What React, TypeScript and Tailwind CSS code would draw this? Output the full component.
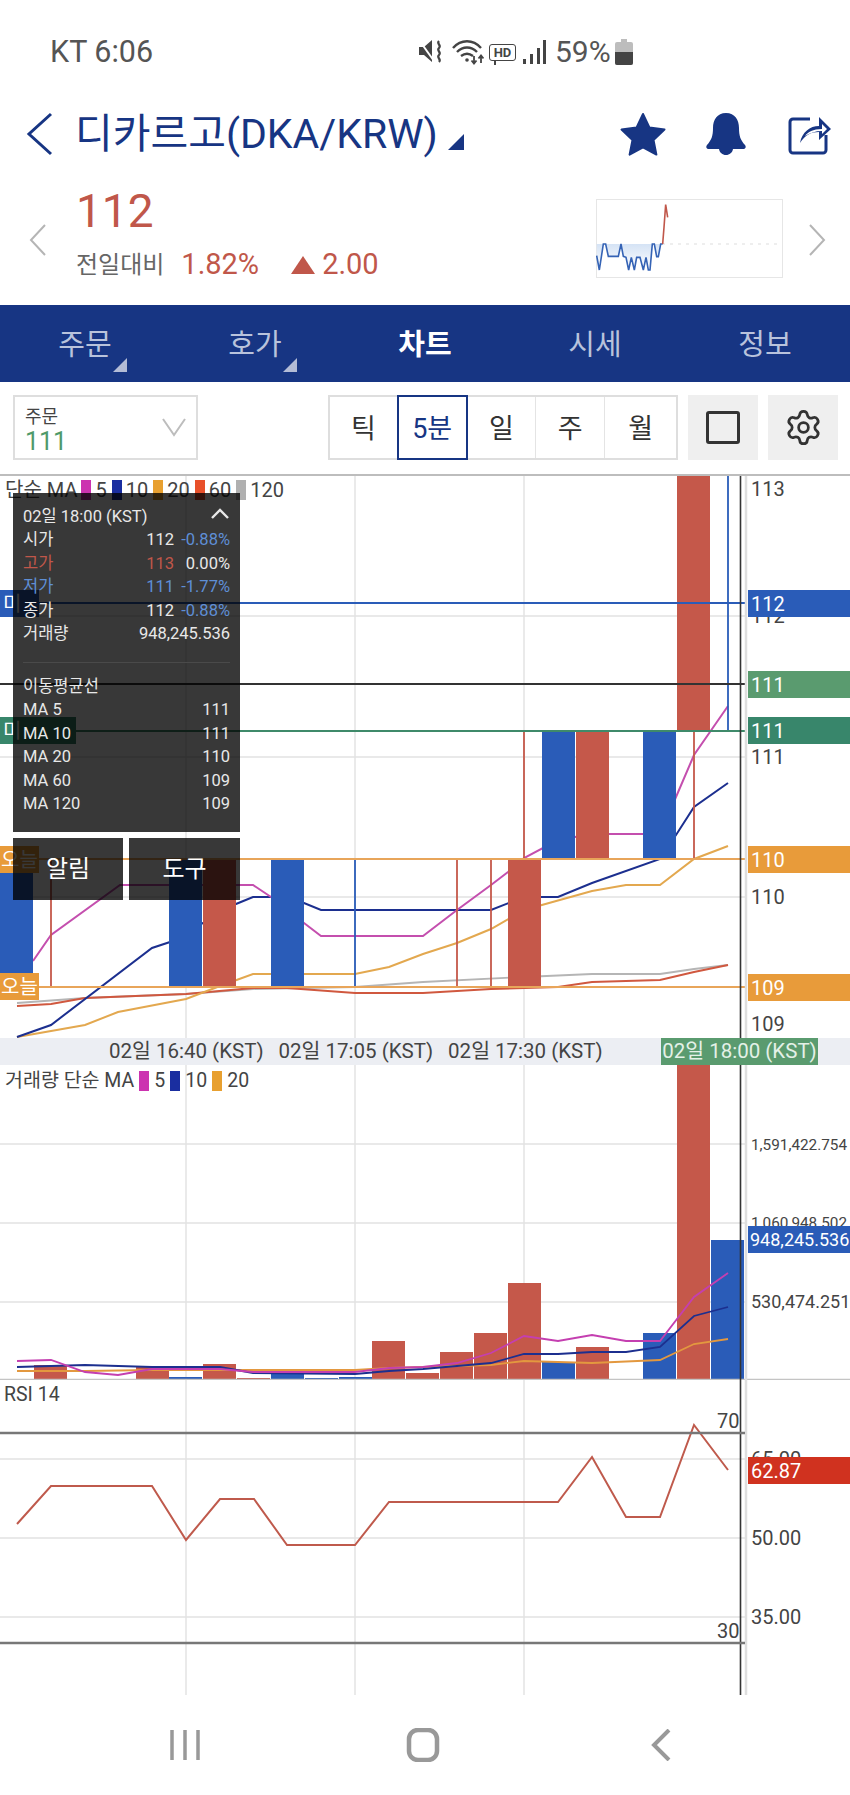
import { Settings } from 'lucide-react';

const CANDLE_RED = '#c5584a';
const CANDLE_BLUE = '#2a5cb8';
const GRID = '#e2e2e2';

type Bar = [number, number, 'r' | 'b'];

const pts = (list: number[][]) => list.map((p) => p.join(',')).join(' ');

const MA5 = [[33, 961], [51, 935], [120, 885], [253, 885], [271, 897], [304, 923], [321, 936], [423, 936], [457, 910], [491, 885], [508, 872], [524, 858], [558, 840], [592, 834], [660, 834], [676, 797], [694, 755], [728, 706]];
const MA10 = [[17, 1037], [51, 1025], [152, 948], [170, 942], [236, 904], [253, 897], [271, 897], [304, 903], [321, 910], [491, 910], [524, 897], [558, 897], [592, 883], [660, 859], [676, 835], [694, 807], [728, 783]];
const MA20 = [[17, 1037], [85, 1025], [118, 1012], [186, 999], [220, 986], [253, 974], [355, 974], [389, 967], [423, 954], [457, 943], [491, 929], [524, 910], [592, 891], [626, 885], [660, 885], [694, 859], [728, 846]];
const MA60 = [[17, 1006], [51, 1004], [85, 998], [186, 994], [253, 988], [287, 988], [355, 993], [423, 993], [491, 989], [558, 987], [592, 982], [660, 980], [694, 972], [728, 965]];
const MA120 = [[17, 1003], [85, 998], [186, 994], [253, 989], [355, 987], [423, 982], [524, 977], [592, 974], [660, 974], [694, 969], [728, 965]];

// candle: x, top, height
const CANDLES: [number, number, number, string][] = [
  [0, 859, 128, CANDLE_BLUE],
  [169, 859, 128, CANDLE_BLUE],
  [203, 859, 128, CANDLE_RED],
  [271, 859, 128, CANDLE_BLUE],
  [508, 859, 128, CANDLE_RED],
  [542, 731, 128, CANDLE_BLUE],
  [576, 731, 128, CANDLE_RED],
  [643, 731, 128, CANDLE_BLUE],
  [677, 474, 257, CANDLE_RED],
];

const WICKS: [number, number, number, string][] = [
  [51, 859, 987, CANDLE_RED],
  [355, 859, 987, CANDLE_BLUE],
  [457, 859, 987, CANDLE_RED],
  [491, 859, 987, CANDLE_RED],
  [524, 731, 859, CANDLE_RED],
  [694, 731, 859, CANDLE_RED],
  [728, 474, 731, CANDLE_BLUE],
];

const VOLUME: Bar[] = [
  [0, 1379, 'b'], [34, 1365, 'r'], [68, 1379, 'r'], [102, 1379, 'r'], [136, 1366, 'r'], [169, 1377, 'b'], [203, 1364, 'r'],
  [237, 1378, 'r'], [271, 1371, 'b'], [305, 1378, 'b'], [339, 1377, 'b'], [372, 1341, 'r'], [406, 1373, 'r'], [440, 1352, 'r'],
  [474, 1333, 'r'], [508, 1283, 'r'], [542, 1362, 'b'], [576, 1347, 'r'], [643, 1333, 'b'], [677, 1065, 'r'], [711, 1240, 'b'],
];

const VOL5 = [[17, 1361], [51, 1360], [85, 1372], [118, 1375], [152, 1369], [220, 1369], [253, 1372], [355, 1372], [389, 1368], [423, 1367], [457, 1363], [491, 1353], [524, 1336], [558, 1341], [592, 1335], [626, 1341], [660, 1341], [694, 1297], [728, 1273]];
const VOL10 = [[17, 1367], [85, 1365], [152, 1367], [220, 1367], [253, 1373], [355, 1374], [389, 1371], [423, 1369], [457, 1366], [491, 1363], [524, 1354], [558, 1354], [592, 1352], [626, 1352], [660, 1347], [694, 1316], [728, 1307]];
const VOL20 = [[17, 1371], [85, 1371], [152, 1370], [355, 1370], [389, 1368], [423, 1367], [491, 1365], [524, 1361], [592, 1363], [660, 1360], [694, 1344], [728, 1339]];

const RSI = [[17, 1524], [51, 1486], [152, 1486], [186, 1540], [220, 1499], [254, 1499], [287, 1545], [355, 1545], [389, 1502], [558, 1502], [592, 1457], [626, 1517], [660, 1517], [694, 1425], [728, 1470]];

const SPARK_BLUE = [[20, 185], [28, 228], [40, 150], [47, 150], [55, 187], [85, 187], [93, 150], [100, 187], [108, 190], [116, 228], [124, 190], [133, 228], [140, 190], [150, 190], [160, 228], [168, 190], [175, 228], [180, 228], [187, 150], [193, 150], [200, 188], [205, 188], [212, 150], [218, 150]];
const SPARK_RED = [[218, 150], [222, 100], [227, 32], [233, 70]];

function VerticalGrid({ top, bottom }: { top: number; bottom: number }) {
  return (
    <g>
      {[186, 355, 524].map((x) => (
        <line key={x} x1={x} x2={x} y1={top} y2={bottom} stroke="#dcdcdc" strokeWidth="1.2" />
      ))}
    </g>
  );
}

function AxisEdge({ top, bottom }: { top: number; bottom: number }) {
  return (
    <g>
      <line x1="746" x2="746" y1={top} y2={bottom} stroke="#dedede" strokeWidth="2.5" />
      <line x1="740.5" x2="740.5" y1={top} y2={bottom} stroke="#333" strokeWidth="1.6" />
    </g>
  );
}

function PriceTag({ className, size = 'text-[20px]', children }: { className: string; size?: string; children: React.ReactNode }) {
  return (
    <div className={`absolute flex h-[27px] items-center overflow-hidden text-white ${size} ${className}`}>{children}</div>
  );
}

function TooltipRow({ label, value, pct, labelColor = 'text-[#e8e8e8]', valueColor = 'text-[#e8e8e8]', pctColor = 'text-[#5f8fd6]' }: {
  label: string; value: string; pct?: string; labelColor?: string; valueColor?: string; pctColor?: string;
}) {
  return (
    <div className="flex h-[23.5px] items-center justify-between">
      <span className={labelColor}>{label}</span>
      <div className="flex items-center">
        <span className={valueColor}>{value}</span>
        {pct && <span className={`w-[56px] text-right ${pctColor}`}>{pct}</span>}
      </div>
    </div>
  );
}

function StatusIcons() {
  return (
    <div className="ml-[264px] flex items-center text-[#555]">
      <svg width="26" height="26" viewBox="0 0 26 26" className="mr-[8px]">
        <path d="M1 8h5l8-7v22l-8-7H1z" fill="#444" />
        <path d="M1 1l15 21" stroke="#fff" strokeWidth="2" />
        <path d="M21 2c-3 3 3 4 0 7s3 4 0 7 3 4 0 7" fill="none" stroke="#444" strokeWidth="2.2" />
      </svg>
      <svg width="32" height="26" viewBox="0 0 32 26" className="mr-[5px]">
        <path d="M1 9c8-9 20-9 28 0M5 13c6-6 14-6 20 0M9 17c4-3 8-3 12 0" fill="none" stroke="#444" strokeWidth="2.4" />
        <circle cx="15" cy="21" r="1.8" fill="#444" />
        <path d="M22 17v7M19.5 21.5l2.5 3 2.5-3M29 24v-7M26.5 19.5l2.5-3 2.5 3" fill="none" stroke="#444" strokeWidth="1.8" />
      </svg>
      <div className="relative mr-[6px] flex h-[17px] w-[27px] items-center justify-center rounded-[3px] border-[1.5px] border-[#444] text-[13px] font-bold leading-none text-[#444]">
        HD
        <span className="absolute bottom-[-5px] left-[4px] h-[5px] w-[2px] bg-[#444]" />
      </div>
      <svg width="24" height="24" viewBox="0 0 24 24" className="mr-[9px]">
        <rect x="1" y="19" width="3" height="5" fill="#444" />
        <rect x="8" y="14" width="3" height="10" fill="#444" />
        <rect x="15" y="8" width="3" height="16" fill="#444" />
        <rect x="21" y="0" width="3" height="24" fill="#444" />
      </svg>
      <span className="w-[55px] text-[30px] leading-none">59%</span>
      <svg width="18" height="26" viewBox="0 0 18 26" className="ml-[5px]">
        <path d="M6 0h6v3h4a2 2 0 0 1 2 2v19a2 2 0 0 1-2 2H2a2 2 0 0 1-2-2V5a2 2 0 0 1 2-2h4z" fill="#bdbdbd" />
        <path d="M0 13h18v11a2 2 0 0 1-2 2H2a2 2 0 0 1-2-2z" fill="#444" />
      </svg>
    </div>
  );
}

function Header() {
  return (
    <div className="flex h-[60px] items-center text-[#173583]">
      <svg width="30" height="44" viewBox="0 0 30 44" className="ml-[25px]">
        <path d="M26 2L4 22l22 20" fill="none" stroke="#173583" strokeWidth="3" />
      </svg>
      <span className="ml-[20px] w-[362px] whitespace-nowrap text-[41px] leading-none">디카르고(DKA/KRW)</span>
      <span className="ml-[11px] mt-[16px] h-0 w-0 border-b-[16px] border-l-[16px] border-b-[#173583] border-l-transparent" />
      <svg width="48" height="44" viewBox="0 0 48 44" className="ml-[155px]">
        <path d="M24 2l6.5 13.6 15 2-11 10.300 2.900 14.700L24 35.300 10.600 42.600l2.900-14.700-11-10.300 15-2z" fill="#173583" stroke="#173583" strokeWidth="2" strokeLinejoin="round" />
      </svg>
      <svg width="42" height="44" viewBox="0 0 42 44" className="ml-[38px]">
        <path d="M21 1c-9 0-13 7-13 15 0 8-1.500 12-6 17-1.500 2-.5 4 2 4h10c.5 3.500 3.500 6 7 6s6.500-2.500 7-6h10c2.500 0 3.500-2 2-4-4.500-5-6-9-6-17 0-8-4-15-13-15z" fill="#173583" />
      </svg>
      <svg width="44" height="42" viewBox="0 0 44 42" className="ml-[41px]">
        <path d="M22 6H5a3 3 0 0 0-3 3v28a3 3 0 0 0 3 3h30a3 3 0 0 0 3-3V22" fill="none" stroke="#173583" strokeWidth="3" />
        <path d="M12 30c2-11 10-17 19-17V4l12 12-12 11v-8c-8 0-14 3-19 11z" fill="#173583" />
        <path d="M17 23c3-4 8-7 17-7V11l5 5-5 5v-3c-7 0-12 2-17 5z" fill="#fff" />
      </svg>
    </div>
  );
}

function PriceSummary() {
  return (
    <div className="flex h-[141px] items-start">
      <svg width="18" height="32" viewBox="0 0 18 32" className="ml-[29px] mt-[60px]">
        <path d="M16 1L2 16l14 15" fill="none" stroke="#b5b5b5" strokeWidth="2" />
      </svg>
      <div className="ml-[29px] mt-[23px] w-[518px]">
        <div className="h-[48px] text-[46px] leading-[48px] text-[#c0574a]">112</div>
        <div className="mt-[11px] flex h-[38px] items-center">
          <span className="text-[24px] text-[#666]">전일대비</span>
          <span className="ml-[17px] text-[29px] text-[#c0574a]">1.82%</span>
          <span className="ml-[32px] h-0 w-0 border-x-[12px] border-b-[18px] border-x-transparent border-b-[#c0574a]" />
          <span className="ml-[7px] text-[29px] text-[#c0574a]">2.00</span>
        </div>
      </div>
      <svg width="187" height="79" viewBox="6 5 187 79" className="ml-[2px] mt-[35px]">
        <defs>
          <linearGradient id="spark-fill" x1="0" y1="0" x2="0" y2="1">
            <stop offset="0" stopColor="#d5e3f5" />
            <stop offset="1" stopColor="#ffffff" />
          </linearGradient>
        </defs>
        <rect x="6.500" y="5.500" width="186" height="78" fill="#fff" stroke="#e6e6e6" />
        <polygon points={pts(SPARK_BLUE.map(([x, y]) => [x / 3, y / 3]).concat([[72.7, 50], [6.7, 50]]))} fill="url(#spark-fill)" />
        <line x1="72" x2="192" y1="50" y2="50" stroke="#dddddd" strokeDasharray="3 5" />
        <polyline points={pts(SPARK_BLUE.map(([x, y]) => [x / 3, y / 3]))} fill="none" stroke="#3563b5" strokeWidth="1.6" />
        <polyline points={pts(SPARK_RED.map(([x, y]) => [x / 3, y / 3]))} fill="none" stroke="#c0574a" strokeWidth="1.6" />
      </svg>
      <svg width="18" height="32" viewBox="0 0 18 32" className="ml-[25px] mt-[60px]">
        <path d="M2 1l14 15L2 31" fill="none" stroke="#b5b5b5" strokeWidth="2" />
      </svg>
    </div>
  );
}

function TabBar() {
  const tabs = ['주문', '호가', '차트', '시세', '정보'];
  return (
    <div className="grid h-[77px] grid-cols-5 bg-[#173583]">
      {tabs.map((tab, i) => (
        <div key={tab} className="relative flex items-center justify-center pt-[4px]">
          <span className={i === 2 ? 'text-[29px] font-bold text-white' : 'text-[29px] text-[#b9c3dc]'}>{tab}</span>
          {i < 2 && (
            <span className="absolute bottom-[10px] left-[113px] h-0 w-0 border-b-[14px] border-l-[14px] border-b-[#b3bcd6] border-l-transparent" />
          )}
        </div>
      ))}
    </div>
  );
}

function Toolbar() {
  const periods = ['틱', '5분', '일', '주', '월'];
  return (
    <div className="flex h-[92px] items-start pt-[13px]">
      <div className="relative ml-[13px] h-[65px] w-[185px] border-2 border-[#dedede] pl-[10px] pt-[9px]">
        <div className="text-[18px] leading-[22px] text-[#444]">주문</div>
        <div className="mt-[1px] text-[25px] leading-[26px] text-[#4f9a6a]">111</div>
        <svg width="26" height="20" viewBox="0 0 26 20" className="absolute right-[9px] top-[20px]">
          <path d="M2 2l11 16L24 2" fill="none" stroke="#bdbdbd" strokeWidth="2" />
        </svg>
      </div>
      <div className="ml-[130px] flex h-[65px] w-[350px] border-2 border-[#dedede]">
        {periods.map((p, i) => (
          <div
            key={p}
            className={
              i === 1
                ? 'z-10 my-[-2px] flex w-[71px] items-center justify-center border-2 border-[#173583] pt-[4px] text-[27px] text-[#173583]'
                : i === 0
                  ? 'flex w-[67px] items-center justify-center pt-[4px] text-[27px] text-[#333]'
                  : 'flex w-[69px] items-center justify-center border-r border-[#e4e4e4] pt-[4px] text-[27px] text-[#333] last:w-[71px] last:border-r-0'
            }
          >
            {p}
          </div>
        ))}
      </div>
      <div className="ml-[10px] flex h-[65px] w-[70px] items-center justify-center bg-[#efefef]">
        <div className="h-[33px] w-[34px] rounded-[3px] border-[3px] border-[#333]" />
      </div>
      <div className="ml-[10px] flex h-[65px] w-[70px] items-center justify-center bg-[#efefef]">
        <Settings size={39} strokeWidth={1.700} color="#333" />
      </div>
    </div>
  );
}

function Tooltip() {
  return (
    <>
      <div className="absolute left-[13px] top-[19px] h-[339px] w-[227px] bg-black/[0.78] pl-[10px] pr-[10px] pt-[12px] text-[16.5px] leading-none text-[#e8e8e8]">
        <div className="relative flex h-[23.5px] items-center">
          <span>02일 18:00 (KST)</span>
          <svg width="20" height="12" viewBox="0 0 20 12" className="absolute right-0 top-[3px]">
            <path d="M2 10l8-8 8 8" fill="none" stroke="#e8e8e8" strokeWidth="2.4" />
          </svg>
        </div>
        <TooltipRow label="시가" value="112" pct="-0.88%" />
        <TooltipRow label="고가" value="113" pct="0.00%" labelColor="text-[#c0574a]" valueColor="text-[#c0574a]" pctColor="text-[#e8e8e8]" />
        <TooltipRow label="저가" value="111" pct="-1.77%" labelColor="text-[#5f8fd6]" valueColor="text-[#5f8fd6]" />
        <TooltipRow label="종가" value="112" pct="-0.88%" />
        <TooltipRow label="거래량" value="948,245.536" />
        <div className="mb-[12px] mt-[16px] h-px bg-[#4a4a4a]" />
        <TooltipRow label="이동평균선" value="" />
        <TooltipRow label="MA 5" value="111" />
        <TooltipRow label="MA 10" value="111" />
        <TooltipRow label="MA 20" value="110" />
        <TooltipRow label="MA 60" value="109" />
        <TooltipRow label="MA 120" value="109" />
      </div>
      <div className="absolute left-[13px] top-[364px] flex gap-[6px] text-[24px] text-white">
        <div className="flex h-[62px] w-[110px] items-center justify-center bg-black/[0.78]">알림</div>
        <div className="flex h-[62px] w-[111px] items-center justify-center bg-black/[0.78]">도구</div>
      </div>
    </>
  );
}

function MainChart() {
  const legend: [string, string][] = [['bg-[#cc33b0]', '5'], ['bg-[#1a2ea0]', '10'], ['bg-[#e8a030]', '20'], ['bg-[#e8502a]', '60'], ['bg-[#b0b0b0]', '120']];
  return (
    <div className="relative h-[564px] overflow-hidden">
      <svg width="850" height="564" viewBox="0 474 850 564" className="absolute inset-0">
        <VerticalGrid top={474} bottom={1038} />
        {[616, 757, 897].map((y) => (
          <line key={y} x1="0" x2="745" y1={y} y2={y} stroke={GRID} strokeWidth="1.500" />
        ))}
        <polyline points={pts(MA120)} fill="none" stroke="#b5b5b5" strokeWidth="1.800" />
        <polyline points={pts(MA60)} fill="none" stroke="#d0583f" strokeWidth="2" />
        <polyline points={pts(MA20)} fill="none" stroke="#e3a84f" strokeWidth="2" />
        <polyline points={pts(MA10)} fill="none" stroke="#1c2f8f" strokeWidth="2" />
        <polyline points={pts(MA5)} fill="none" stroke="#c44fae" strokeWidth="2" />
        {WICKS.map(([x, y1, y2, c]) => (
          <line key={`${x}`} x1={x} x2={x} y1={y1} y2={y2} stroke={c} strokeWidth="1.800" />
        ))}
        {CANDLES.map(([x, y, h, c]) => (
          <rect key={x} x={x} y={y} width="33" height={h} fill={c} />
        ))}
        <line x1="0" x2="745" y1="603" y2="603" stroke="#2a5cb8" strokeWidth="1.800" />
        <line x1="0" x2="745" y1="684" y2="684" stroke="#333" strokeWidth="1.800" />
        <line x1="0" x2="745" y1="731" y2="731" stroke="#3f8a6a" strokeWidth="1.800" />
        <line x1="0" x2="745" y1="859" y2="859" stroke="#e8a55a" strokeWidth="1.800" />
        <line x1="0" x2="745" y1="987" y2="987" stroke="#e8a55a" strokeWidth="1.800" />
        <AxisEdge top={474} bottom={1038} />
        <g fontSize="20" fill="#444" fontFamily="Roboto">
          <text x="751" y="496">113</text>
          <text x="751" y="623">112</text>
          <text x="751" y="764">111</text>
          <text x="751" y="904">110</text>
          <text x="751" y="1031">109</text>
        </g>
      </svg>

      <div className="absolute inset-x-0 top-0 h-[2px] bg-[#bdbdbd]" />

      <div className="absolute left-[5px] top-[5px] flex h-[22px] items-center text-[20px] leading-none text-[#444]">
        <span className="mr-[4px]">단순 MA</span>
        {legend.map(([color, label]) => (
          <span key={label} className="flex items-center">
            <span className={`mr-[4px] h-[20px] w-[10px] ${color}`} />
            <span className="mr-[5px]">{label}</span>
          </span>
        ))}
      </div>

      <PriceTag className="left-0 top-[116px] w-[39px] bg-[#2a5cb8] pl-[3px]">미</PriceTag>
      <PriceTag className="left-0 top-[243px] w-[76px] bg-[#38866b] pl-[3px]">미</PriceTag>
      <PriceTag className="left-0 top-[372px] w-[39px] bg-[#e89b3a] pl-[1px]">오늘</PriceTag>
      <PriceTag className="left-0 top-[499px] w-[39px] bg-[#e89b3a] pl-[1px]">오늘</PriceTag>

      <PriceTag className="left-[748px] top-[116px] w-[102px] bg-[#2a5cb8] pl-[3px]">112</PriceTag>
      <PriceTag className="left-[748px] top-[197px] w-[102px] bg-[#5a9b6f] pl-[3px]">111</PriceTag>
      <PriceTag className="left-[748px] top-[243px] w-[102px] bg-[#38866b] pl-[3px]">111</PriceTag>
      <PriceTag className="left-[748px] top-[372px] w-[102px] bg-[#e89b3a] pl-[3px]">110</PriceTag>
      <PriceTag className="left-[748px] top-[500px] w-[102px] bg-[#e89b3a] pl-[3px]">109</PriceTag>

      <Tooltip />
    </div>
  );
}

function TimeAxis() {
  return (
    <div className="relative flex h-[27px] items-center gap-[15px] bg-[#eceef3] pl-[109px] text-[20.5px] leading-none text-[#444]">
      <span>02일 16:40 (KST)</span>
      <span>02일 17:05 (KST)</span>
      <span>02일 17:30 (KST)</span>
      <span className="absolute left-[661px] top-0 flex h-[27px] w-[157px] items-center justify-center bg-[#5a9b6f] text-[#e4f1e7]">02일 18:00 (KST)</span>
    </div>
  );
}

function VolumeChart() {
  const legend: [string, string][] = [['bg-[#cc33b0]', '5'], ['bg-[#1a2ea0]', '10'], ['bg-[#e8a030]', '20']];
  return (
    <div className="relative h-[315px] overflow-hidden">
      <svg width="850" height="315" viewBox="0 1065 850 315" className="absolute inset-0">
        <VerticalGrid top={1065} bottom={1380} />
        {[1144, 1223, 1302].map((y) => (
          <line key={y} x1="0" x2="745" y1={y} y2={y} stroke={GRID} strokeWidth="1.500" />
        ))}
        {VOLUME.map(([x, y, t]) => (
          <rect key={x} x={x} y={y} width="33" height={1380 - y} fill={t === 'r' ? CANDLE_RED : CANDLE_BLUE} />
        ))}
        <polyline points={pts(VOL20)} fill="none" stroke="#e3983f" strokeWidth="1.800" />
        <polyline points={pts(VOL10)} fill="none" stroke="#1c2f8f" strokeWidth="1.800" />
        <polyline points={pts(VOL5)} fill="none" stroke="#c43fb0" strokeWidth="1.800" />
        <line x1="0" x2="850" y1="1379.500" y2="1379.500" stroke="#c4c4c4" strokeWidth="1.500" />
        <AxisEdge top={1065} bottom={1380} />
        <g fill="#444" fontFamily="Roboto">
          <text x="751" y="1149.500" fontSize="15.300">1,591,422.754</text>
          <text x="751" y="1228" fontSize="15.300">1,060,948.502</text>
          <text x="751" y="1308" fontSize="18">530,474.251</text>
        </g>
      </svg>
      <div className="absolute left-[5px] top-[6px] flex h-[20px] items-center text-[19.500px] leading-none text-[#444]">
        <span className="mr-[5px]">거래량 단순 MA</span>
        {legend.map(([color, label]) => (
          <span key={label} className="flex items-center">
            <span className={`mr-[5px] h-[20px] w-[10px] ${color}`} />
            <span className="mr-[5px]">{label}</span>
          </span>
        ))}
      </div>
      <PriceTag size="text-[18px]" className="left-[748px] top-[161px] w-[102px] bg-[#2a5cb8] pl-[2px]">948,245.536</PriceTag>
    </div>
  );
}

function RsiChart() {
  return (
    <div className="relative h-[315px] overflow-hidden">
      <svg width="850" height="315" viewBox="0 1380 850 315" className="absolute inset-0">
        <VerticalGrid top={1380} bottom={1695} />
        {[1459, 1538, 1617].map((y) => (
          <line key={y} x1="0" x2="745" y1={y} y2={y} stroke={GRID} strokeWidth="1.500" />
        ))}
        <polyline points={pts(RSI)} fill="none" stroke="#bf5a4c" strokeWidth="2" />
        <AxisEdge top={1380} bottom={1695} />
        <line x1="0" x2="745" y1="1433" y2="1433" stroke="#777" strokeWidth="2.500" />
        <line x1="0" x2="745" y1="1643" y2="1643" stroke="#777" strokeWidth="2.500" />
        <g fontSize="20" fill="#444" fontFamily="Roboto">
          <text x="717" y="1428">70</text>
          <text x="717" y="1638">30</text>
          <text x="751" y="1466">65.00</text>
          <text x="751" y="1545">50.00</text>
          <text x="751" y="1624">35.00</text>
        </g>
      </svg>
      <div className="absolute left-[4px] top-[5px] text-[19.500px] leading-[20px] text-[#444]">RSI 14</div>
      <PriceTag className="left-[748px] top-[77px] w-[102px] bg-[#d0321f] pl-[3px]">62.87</PriceTag>
    </div>
  );
}

function BottomNav() {
  return (
    <div className="ml-[66px] grid h-[100px] grid-cols-[238px_238px_238px] items-center justify-items-center">
      <svg width="32" height="32" viewBox="0 0 32 32">
        <path d="M3 1v30M16 1v30M29 1v30" fill="none" stroke="#999" strokeWidth="3.500" />
      </svg>
      <svg width="34" height="34" viewBox="0 0 34 34">
        <rect x="3" y="2" width="28" height="30" rx="9" fill="none" stroke="#999" strokeWidth="4.500" />
      </svg>
      <svg width="20" height="32" viewBox="0 0 20 32">
        <path d="M18 1L3 16l15 15" fill="none" stroke="#999" strokeWidth="4" />
      </svg>
    </div>
  );
}

export default function App() {
  return (
    <div className="h-[1795px] w-[850px] overflow-hidden bg-white font-[Roboto,'Noto_Sans_CJK_KR',sans-serif]">
      <div className="flex h-[104px] items-center text-[#555]">
        <span className="ml-[50px] w-[104px] whitespace-nowrap text-[30.5px] leading-none">KT 6:06</span>
        <StatusIcons />
      </div>
      <Header />
      <PriceSummary />
      <TabBar />
      <Toolbar />
      <MainChart />
      <TimeAxis />
      <VolumeChart />
      <RsiChart />
      <BottomNav />
    </div>
  );
}
